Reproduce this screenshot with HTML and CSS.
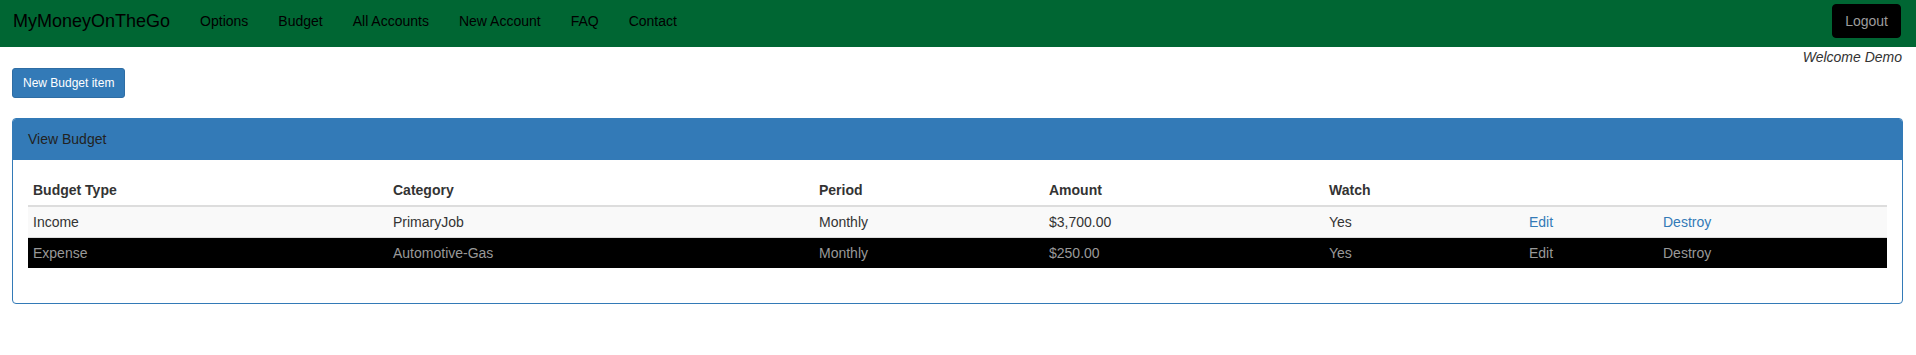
FILE: index.html
```html
<!DOCTYPE html>
<html lang="en">
<head>
    <meta charset="UTF-8">
    <meta name="viewport" content="width=device-width, initial-scale=1.0">
    <title>MyMoneyOnTheGo - Budget</title>
    <link rel="stylesheet" href="styles.css">
</head>
<body>

    <nav class="navbar">
        <a class="navbar-brand" href="#">MyMoneyOnTheGo</a>
        <ul class="nav-links">
            <li><a href="#">Options</a></li>
            <li><a href="#">Budget</a></li>
            <li><a href="#">All Accounts</a></li>
            <li><a href="#">New Account</a></li>
            <li><a href="#">FAQ</a></li>
            <li><a href="#">Contact</a></li>
        </ul>
        <button class="btn-logout">Logout</button>
    </nav>

    <div class="page">
        <p class="welcome"><em>Welcome Demo</em></p>

        <div class="actions">
            <button class="btn-new">New Budget item</button>
        </div>

        <div class="panel">
            <div class="panel-heading">View Budget</div>
            <div class="panel-body">
                <table class="budget-table">
                    <colgroup>
                        <col class="col-type">
                        <col class="col-category">
                        <col class="col-period">
                        <col class="col-amount">
                        <col class="col-watch">
                        <col class="col-edit">
                        <col class="col-destroy">
                    </colgroup>
                    <thead>
                        <tr>
                            <th>Budget Type</th>
                            <th>Category</th>
                            <th>Period</th>
                            <th>Amount</th>
                            <th>Watch</th>
                            <th></th>
                            <th></th>
                        </tr>
                    </thead>
                    <tbody>
                        <tr class="income">
                            <td>Income</td>
                            <td>PrimaryJob</td>
                            <td>Monthly</td>
                            <td>$3,700.00</td>
                            <td>Yes</td>
                            <td><a href="#">Edit</a></td>
                            <td><a href="#">Destroy</a></td>
                        </tr>
                        <tr class="expense">
                            <td>Expense</td>
                            <td>Automotive-Gas</td>
                            <td>Monthly</td>
                            <td>$250.00</td>
                            <td>Yes</td>
                            <td><a href="#">Edit</a></td>
                            <td><a href="#">Destroy</a></td>
                        </tr>
                    </tbody>
                </table>
            </div>
        </div>
    </div>

</body>
</html>
```

FILE: styles.css
```css
body {
    font-family: "Liberation Sans", Arial, sans-serif;
    font-size: 14px;
    line-height: 20px;
    color: #333;
    background-color: #fff;
    margin: 0;
    padding: 0;
}
a {
    text-decoration: none;
}
.navbar {
    display: flex;
    align-items: flex-start;
    height: 47px;
    background-color: #006633;
    padding: 0 15px 0 13px;
}
.navbar-brand {
    color: #000;
    font-size: 18px;
    line-height: 20px;
    padding: 11px 15px 0 0;
}
.nav-links {
    display: flex;
    list-style-type: none;
    margin: 0;
    padding: 0;
    flex: 1;
}
.nav-links a {
    display: block;
    color: #000;
    padding: 11px 15px 0 15px;
}
.btn-logout {
    margin-top: 4px;
    height: 34px;
    padding: 6px 12px;
    font-family: inherit;
    font-size: 14px;
    line-height: 20px;
    color: #9d9d9d;
    background-color: #000;
    border: 1px solid #000;
    border-radius: 4px;
    cursor: pointer;
}
.page {
    padding: 0 13px 0 12px;
}
.welcome {
    margin: 0 1px 1px 0;
    text-align: right;
}
.actions {
    margin-bottom: 20px;
}
.btn-new {
    height: 30px;
    padding: 5px 10px;
    font-family: inherit;
    font-size: 12px;
    line-height: 18px;
    color: #fff;
    background-color: #337ab7;
    border: 1px solid #2e6da4;
    border-radius: 3px;
    cursor: pointer;
}
.panel {
    border: 1px solid #337ab7;
    border-radius: 4px;
}
.panel-heading {
    background-color: #337ab7;
    color: #222;
    padding: 10px 15px;
    border-bottom: 1px solid #337ab7;
    border-radius: 3px 3px 0 0;
}
.panel-body {
    padding: 15px;
}
.budget-table {
    width: 100%;
    table-layout: fixed;
    border-collapse: collapse;
    margin-bottom: 20px;
}
.col-type { width: 360px; }
.col-category { width: 426px; }
.col-period { width: 230px; }
.col-amount { width: 280px; }
.col-watch { width: 200px; }
.col-edit { width: 134px; }
.col-destroy { width: 229px; }
.budget-table th {
    text-align: left;
    padding: 5px;
    border-bottom: 2px solid #ddd;
}
.budget-table td {
    padding: 5px;
    border-top: 1px solid #ddd;
}
.income {
    background-color: #f9f9f9;
}
.income a {
    color: #337ab7;
}
.expense {
    background-color: #000;
    color: #999;
}
.expense a {
    color: #999;
}
```
